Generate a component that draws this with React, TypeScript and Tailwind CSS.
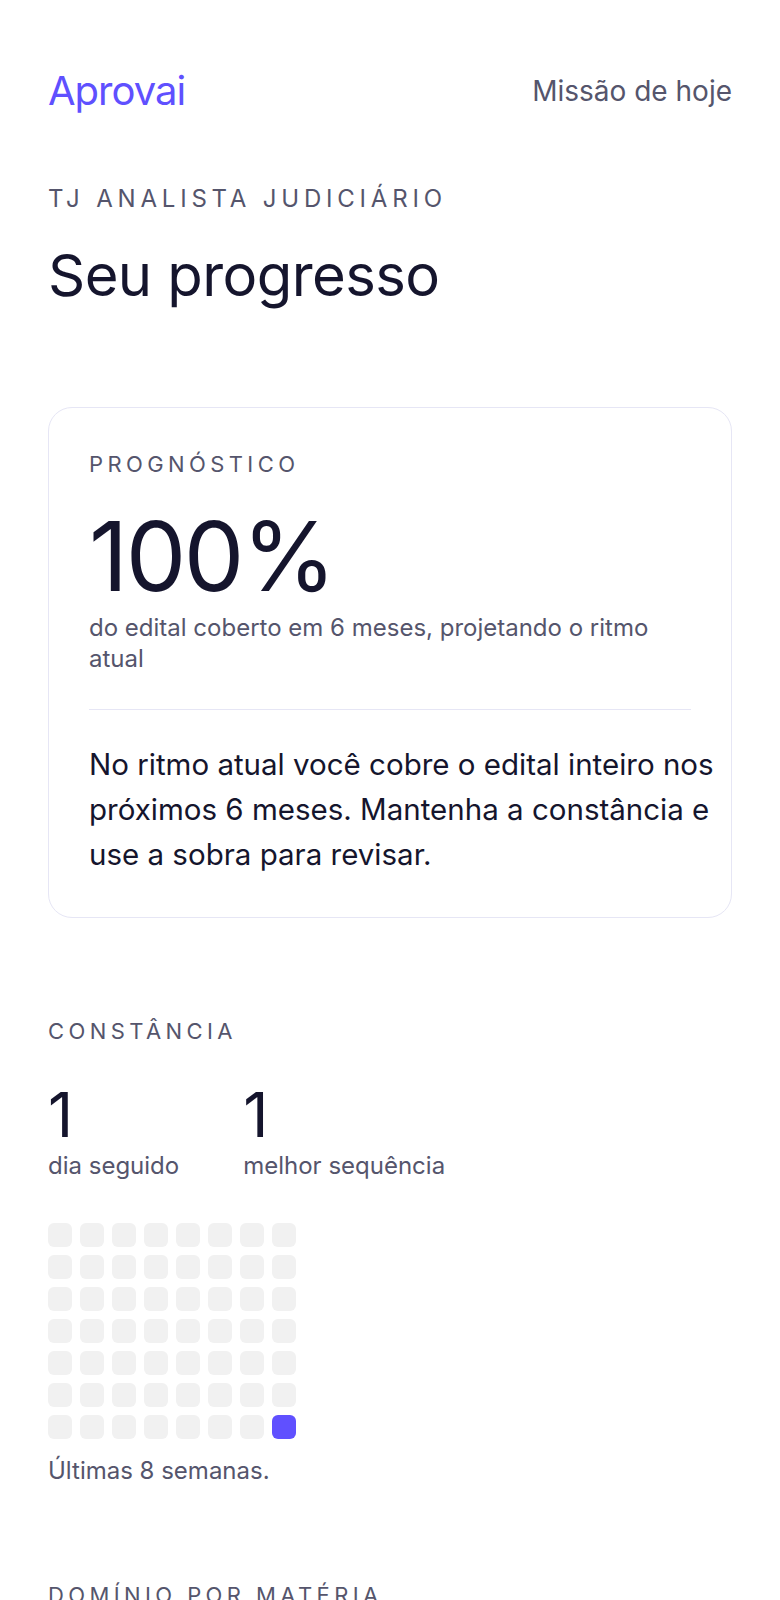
import React from 'react';

const font = "font-['Inter','Noto_Sans',sans-serif]";

const weeks = 8;
const days = 7;
// one active day: last cell of the last row
const activeCells = new Set<number>([days * weeks - 1]);

function Label({ children }: { children: React.ReactNode }) {
  return (
    <p className="text-[22px] leading-[33px] uppercase tracking-[0.2em] text-[#55556c]">
      {children}
    </p>
  );
}

export default function App() {
  return (
    <div className={`min-h-screen bg-white px-12 text-[#15152d] ${font}`}>
      <header className="flex items-center justify-between pt-[66px]">
        <span className="text-[40px] leading-[50px] tracking-tight text-[#5f50ff]">Aprovai</span>
        <span className="text-[28px] leading-[36px] text-[#55556c]">Missão de hoje</span>
      </header>

      <section className="mt-[65px]">
        <p className="text-[24px] leading-[36px] uppercase tracking-[0.2em] text-[#55556c]">
          TJ Analista Judiciário
        </p>
        <h1 className="mt-[23px] text-[58px] leading-[70px] tracking-[-0.01em]">Seu progresso</h1>
      </section>

      <article className="mt-[97px] rounded-[24px] border border-[#e6e6f5] p-10">
        <Label>Prognóstico</Label>
        <div className="mt-[27px] text-[96px] leading-[96px] tracking-tight">100%</div>
        <p className="mt-2 text-[24px] leading-[31px] text-[#55556c]">
          do edital coberto em 6 meses, projetando o ritmo atual
        </p>
        <div className="mt-[35px] h-px bg-[#e6e6f5]" />
        <p className="mr-[-30px] mt-8 text-[29.5px] leading-[45px] text-[#15152d]">
          No ritmo atual você cobre o edital inteiro nos próximos 6 meses. Mantenha a constância e
          use a sobra para revisar.
        </p>
      </article>

      <section className="mt-[97px]">
        <Label>Constância</Label>
        <div className="mt-9 flex gap-16">
          <div>
            <div className="text-[62px] leading-[62px]">1</div>
            <div className="mt-[5px] text-[24px] leading-[30px] text-[#55556c]">dia seguido</div>
          </div>
          <div>
            <div className="text-[62px] leading-[62px]">1</div>
            <div className="mt-[5px] text-[24px] leading-[30px] text-[#55556c]">melhor sequência</div>
          </div>
        </div>

        <div className="mt-[42px] grid w-fit grid-cols-[repeat(8,24px)] gap-2">
          {Array.from({ length: weeks * days }, (_, i) => (
            <div
              key={i}
              className={`h-6 w-6 rounded-md ${activeCells.has(i) ? 'bg-[#6050ff]' : 'bg-[#f1f1f1]'}`}
            />
          ))}
        </div>
        <p className="mt-[17px] text-[24px] leading-[30px] text-[#55556c]">Últimas 8 semanas.</p>
      </section>

      <section className="mt-[93px] pb-20">
        <Label>Domínio por matéria</Label>
      </section>
    </div>
  );
}
